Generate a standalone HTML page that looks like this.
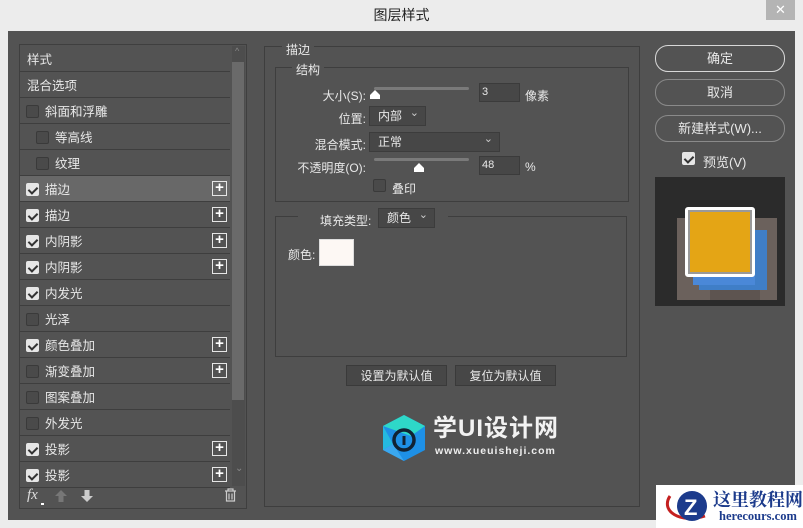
<!DOCTYPE html>
<html><head><meta charset="utf-8"><style>
*{margin:0;padding:0;box-sizing:border-box}
body{width:803px;height:528px;background:#ececec;position:relative;overflow:hidden;font-family:"Liberation Sans","Noto Sans CJK SC",sans-serif;font-size:12px;color:#e8e8e8}
.a{position:absolute}
.title{left:0;top:0;width:803px;height:31px;text-align:center;line-height:31px;font-size:14px;color:#222}
.close{left:766px;top:0;width:29px;height:20px;background:#b4b4b4;color:#fff;text-align:center;line-height:20px;font-size:13px}
.body{left:8px;top:31px;width:787px;height:489px;background:#535353}
.list{left:19px;top:44px;width:228px;height:465px;border:1px solid #3f3f3f}
.row{position:absolute;left:20px;width:210px;height:26px;border-bottom:1px solid #3e3e3e;line-height:28px;font-size:12.5px}
.cb{position:absolute;top:7px;width:13px;height:13px;border:1px solid #3a3a3a;background:#4a4a4a;border-radius:2px}
.cb.on{background:#e6e6e6;border-color:#e6e6e6}
.cb.on:after{content:"";position:absolute;left:3px;top:1px;width:4px;height:7px;border:solid #333;border-width:0 2px 2px 0;transform:rotate(45deg)}
.plus{position:absolute;left:192px;top:5px;width:15px;height:15px;border:1px solid #e6e6e6;color:#fff;text-align:center;line-height:12px;font-size:15px;font-weight:bold}
.grp{border:1px solid #3e3e3e}
.lbl{text-align:right;font-size:12px}
.inp{background:#474747;border:1px solid #3b3b3b;height:19px;line-height:17px;padding-left:2px;font-size:11px}
.sel{background:#474747;border:1px solid #3c3c3c;height:20px;line-height:19px;padding-left:8px;font-size:12px}
.sel:after{content:"⌄";position:absolute;right:6px;top:-3px;font-size:11px;color:#ccc}
.track{height:3px;background:#7a7a7a;border-radius:2px}
.thumb{width:10px;height:9px;background:#fff;clip-path:polygon(50% 0,100% 55%,100% 100%,0 100%,0 55%)}
.btn{border:1px solid #8a8a8a;border-radius:13px;text-align:center;line-height:25px;font-size:13px}
.sbtn{background:#474747;border:1px solid #3a3a3a;text-align:center;line-height:20px;font-size:12px}
</style></head><body>
<div class="a title">图层样式</div>
<div class="a close">✕</div>
<div class="a body"></div>
<div class="a list"></div>
<div class="a" style="left:232px;top:46px;width:13px;height:440px;background:#4d4d4d"></div>
<div class="a" style="left:232px;top:62px;width:12px;height:338px;background:#6a6a6a"></div>
<div class="a" style="left:235px;top:46px;font-size:9px;color:#888">^</div>
<div class="a" style="left:235px;top:463px;font-size:10px;color:#888">⌄</div>

<div class="row" style="top:46px;padding-left:7px">样式</div>
<div class="row" style="top:72px;padding-left:7px">混合选项</div>
<div class="row" style="top:98px"><span class="cb" style="left:6px"></span><span style="margin-left:25px">斜面和浮雕</span></div>
<div class="row" style="top:124px"><span class="cb" style="left:16px"></span><span style="margin-left:35px">等高线</span></div>
<div class="row" style="top:150px"><span class="cb" style="left:16px"></span><span style="margin-left:35px">纹理</span></div>
<div class="row" style="top:176px;background:#686868"><span class="cb on" style="left:6px"></span><span style="margin-left:25px">描边</span><span class="plus">+</span></div>
<div class="row" style="top:202px"><span class="cb on" style="left:6px"></span><span style="margin-left:25px">描边</span><span class="plus">+</span></div>
<div class="row" style="top:228px"><span class="cb on" style="left:6px"></span><span style="margin-left:25px">内阴影</span><span class="plus">+</span></div>
<div class="row" style="top:254px"><span class="cb on" style="left:6px"></span><span style="margin-left:25px">内阴影</span><span class="plus">+</span></div>
<div class="row" style="top:280px"><span class="cb on" style="left:6px"></span><span style="margin-left:25px">内发光</span></div>
<div class="row" style="top:306px"><span class="cb" style="left:6px"></span><span style="margin-left:25px">光泽</span></div>
<div class="row" style="top:332px"><span class="cb on" style="left:6px"></span><span style="margin-left:25px">颜色叠加</span><span class="plus">+</span></div>
<div class="row" style="top:358px"><span class="cb" style="left:6px"></span><span style="margin-left:25px">渐变叠加</span><span class="plus">+</span></div>
<div class="row" style="top:384px"><span class="cb" style="left:6px"></span><span style="margin-left:25px">图案叠加</span></div>
<div class="row" style="top:410px"><span class="cb" style="left:6px"></span><span style="margin-left:25px">外发光</span></div>
<div class="row" style="top:436px"><span class="cb on" style="left:6px"></span><span style="margin-left:25px">投影</span><span class="plus">+</span></div>
<div class="row" style="top:462px"><span class="cb on" style="left:6px"></span><span style="margin-left:25px">投影</span><span class="plus">+</span></div>
<div class="a" style="left:27px;top:487px;font-style:italic;font-family:'Liberation Serif',serif;font-size:15px;color:#ddd">fx</div>
<div class="a" style="left:41px;top:503px;width:3px;height:2px;background:#fff"></div>
<svg class="a" style="left:54px;top:489px" width="14" height="14"><path d="M7 1L13 7H9.5V13H4.5V7H1Z" fill="#777"/></svg>
<svg class="a" style="left:80px;top:489px" width="14" height="14"><path d="M7 13L13 7H9.5V1H4.5V7H1Z" fill="#ccc"/></svg>
<svg class="a" style="left:224px;top:488px" width="13" height="14"><path d="M1 3h11M4 3V1h5v2M2.5 3.5v9.5h8V3.5M5 5.5v6M8 5.5v6" stroke="#ccc" fill="none" stroke-width="1.2"/></svg>

<!-- middle -->
<div class="a grp" style="left:264px;top:46px;width:376px;height:461px"></div>
<div class="a" style="left:282px;top:41px;padding:0 4px;background:#535353">描边</div>
<div class="a grp" style="left:275px;top:67px;width:354px;height:135px"></div>
<div class="a" style="left:292px;top:61px;padding:0 4px;background:#535353">结构</div>
<div class="a lbl" style="left:290px;top:87px;width:76px">大小(S):</div>
<div class="a track" style="left:374px;top:87px;width:95px"></div>
<div class="a thumb" style="left:370px;top:90px"></div>
<div class="a inp" style="left:479px;top:83px;width:41px">3</div>
<div class="a" style="left:525px;top:87px">像素</div>
<div class="a lbl" style="left:290px;top:110px;width:76px">位置:</div>
<div class="a sel" style="left:369px;top:106px;width:57px">内部</div>
<div class="a lbl" style="left:290px;top:136px;width:76px">混合模式:</div>
<div class="a sel" style="left:369px;top:132px;width:131px">正常</div>
<div class="a lbl" style="left:270px;top:159px;width:96px">不透明度(O):</div>
<div class="a track" style="left:374px;top:158px;width:95px"></div>
<div class="a thumb" style="left:414px;top:163px"></div>
<div class="a inp" style="left:479px;top:156px;width:41px">48</div>
<div class="a" style="left:525px;top:160px">%</div>
<div class="a cb" style="left:373px;top:179px"></div>
<div class="a" style="left:392px;top:180px">叠印</div>

<div class="a grp" style="left:275px;top:216px;width:352px;height:141px"></div>
<div class="a" style="left:298px;top:208px;width:150px;height:20px;background:#535353"></div>
<div class="a" style="left:320px;top:212px">填充类型:</div>
<div class="a sel" style="left:378px;top:208px;width:57px">颜色</div>
<div class="a" style="left:288px;top:246px">颜色:</div>
<div class="a" style="left:319px;top:239px;width:35px;height:27px;background:#fdf8f4;border:1px solid #ddd"></div>

<div class="a sbtn" style="left:346px;top:365px;width:101px;height:21px">设置为默认值</div>
<div class="a sbtn" style="left:455px;top:365px;width:101px;height:21px">复位为默认值</div>

<svg class="a" style="left:381px;top:414px" width="46" height="48"><polygon points="23,1 44,12 44,36 23,47 2,36 2,12" fill="#1e90e6"/><polygon points="23,1 44,12 30,22 2,12" fill="#2ed8c8"/><polygon points="2,12 12,30 2,36" fill="#25b9e0"/><polygon points="12,30 23,47 2,36" fill="#3aa8f0"/><circle cx="23" cy="26" r="10" fill="none" stroke="#123" stroke-width="3.5"/><rect x="21.5" y="22" width="3" height="9" fill="#123"/></svg>
<div class="a" style="left:433px;top:415px;font-size:24px;font-weight:bold;color:#f2f2f2;letter-spacing:1px;line-height:28px">学UI设计网</div>
<div class="a" style="left:435px;top:445px;font-size:10.5px;font-weight:bold;color:#eee;letter-spacing:1px">www.xueuisheji.com</div>

<!-- right -->
<div class="a btn" style="left:655px;top:45px;width:130px;height:27px;border-color:#d8d8d8">确定</div>
<div class="a btn" style="left:655px;top:79px;width:130px;height:27px">取消</div>
<div class="a btn" style="left:655px;top:115px;width:130px;height:27px">新建样式(W)...</div>
<div class="a cb on" style="left:682px;top:152px"></div>
<div class="a" style="left:703px;top:152px;font-size:13px">预览(V)</div>
<div class="a" style="left:655px;top:177px;width:130px;height:129px;background:#2b2b2b"></div>
<div class="a" style="left:677px;top:218px;width:100px;height:82px;background:#6b615c"></div>
<div class="a" style="left:710px;top:238px;width:50px;height:62px;background:#5d5450"></div>
<div class="a" style="left:699px;top:230px;width:68px;height:60px;background:#3f7ec7"></div>
<div class="a" style="left:693px;top:225px;width:62px;height:60px;background:#4a88d8"></div>
<div class="a" style="left:685px;top:207px;width:70px;height:70px;background:#999;border:3px solid #fff;border-radius:3px"></div>
<div class="a" style="left:690px;top:212px;width:60px;height:60px;background:#e4a515"></div>

<!-- watermark -->
<div class="a" style="left:656px;top:485px;width:147px;height:43px;background:#fff"></div>
<svg class="a" style="left:660px;top:486px" width="56" height="40"><path d="M10 10 C0 25 20 38 45 30" stroke="#c42020" stroke-width="3" fill="none"/><circle cx="32" cy="20" r="15" fill="#1c3b8c"/><text x="24" y="29" font-size="22" font-weight="bold" fill="#fff" font-family="Liberation Sans">Z</text></svg>
<div class="a" style="left:713px;top:486px;font-size:18px;font-weight:bold;color:#1c3b8c;font-family:'Liberation Serif','Noto Serif CJK SC',serif">这里教程网</div>
<div class="a" style="left:719px;top:509px;font-size:12.5px;font-weight:bold;color:#1c3b8c;font-family:'Liberation Serif',serif">herecours.com</div>
</body></html>
